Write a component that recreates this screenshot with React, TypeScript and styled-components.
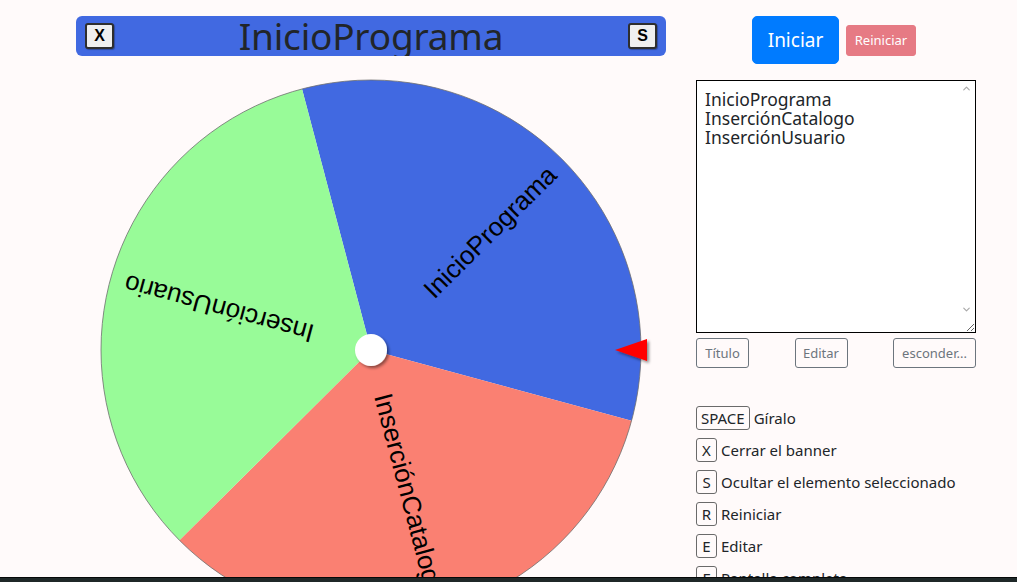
import styled, { createGlobalStyle } from "styled-components";
import { ChevronUp, ChevronDown } from "lucide-react";

const GlobalStyle = createGlobalStyle`
    html, body {
        margin: 0;
        padding: 0;
        overflow: hidden;
        background: #fffafa;
        font-family: "Noto Sans", "Open Sans", sans-serif;
        color: #212529;
    }
`;

const Page = styled.main`
    display: flex;
    flex-direction: row;
    align-items: flex-start;
    gap: 30px;
    padding: 16px 0 0 76px;
`;

const LeftColumn = styled.section`
    width: 590px;
    display: flex;
    flex-direction: column;
`;

const Banner = styled.header`
    height: 40px;
    background: #4169e1;
    border-radius: 6px;
    display: grid;
    grid-template-columns: auto 1fr auto;
    align-items: center;
    padding: 0 9px;
    box-sizing: border-box;
    overflow: hidden;
`;

const BannerTitle = styled.h1`
    margin: 0;
    font-size: 37px;
    font-weight: 400;
    line-height: 40px;
    height: 40px;
    text-align: center;
    color: #212529;
    letter-spacing: -0.2px;
`;

const BannerButton = styled.button`
    width: 29px;
    height: 26px;
    padding: 0;
    background: #efefef;
    border: 2px solid #2e2e2e;
    border-radius: 3px;
    font-family: "Liberation Sans", Arial, sans-serif;
    font-weight: 700;
    font-size: 16px;
    color: #000;
    box-shadow: 1px 1px 1px rgba(0, 0, 0, 0.3);
`;

const WheelArea = styled.div`
    margin-top: 14px;
    height: 560px;
`;

const RightColumn = styled.aside`
    width: 280px;
    display: flex;
    flex-direction: column;
`;

const ButtonRow = styled.div`
    display: flex;
    justify-content: center;
    align-items: center;
    gap: 7px;
    height: 48px;
    padding-right: 4px;
`;

const StartButton = styled.button`
    background: #007bff;
    color: #fff;
    border: 1px solid #007bff;
    border-radius: 5px;
    font-family: inherit;
    font-size: 19px;
    height: 48px;
    width: 87px;
    padding: 0;
`;

const ResetButton = styled.button`
    background: #e67a84;
    color: #fff;
    border: 1px solid #e67a84;
    border-radius: 3px;
    font-family: inherit;
    font-size: 13px;
    height: 31px;
    width: 70px;
    padding: 0;
`;

const EditorWrap = styled.div`
    position: relative;
    margin-top: 16px;
    height: 253px;
`;

const Editor = styled.textarea`
    width: 280px;
    height: 253px;
    box-sizing: border-box;
    border: 1px solid #000;
    background: #fff;
    padding: 9px 8px;
    font-family: inherit;
    font-size: 17.5px;
    line-height: 19px;
    color: #212529;
    outline: none;
    resize: both;
    display: block;
`;

const ScrollArrow = styled.span<{ $bottom?: boolean }>`
    position: absolute;
    right: 4px;
    ${(p) => (p.$bottom ? "bottom: 18px;" : "top: 3px;")}
    color: #a8a8a8;
    display: flex;
`;

const ActionRow = styled.div`
    margin-top: 5px;
    display: flex;
    justify-content: space-between;
`;

const OutlineButton = styled.button<{ $width: number }>`
    width: ${(p) => p.$width}px;
    height: 30px;
    padding: 0;
    background: transparent;
    border: 1px solid #6c757d;
    border-radius: 3px;
    color: #6c757d;
    font-family: inherit;
    font-size: 13px;
`;

const ShortcutList = styled.ul`
    list-style: none;
    margin: 38px 0 0;
    padding: 0;
    display: flex;
    flex-direction: column;
    gap: 8px;
`;

const ShortcutRow = styled.li`
    display: flex;
    align-items: center;
    gap: 4px;
    height: 24px;
    font-size: 15px;
    color: #212529;
`;

const Key = styled.kbd`
    font-family: inherit;
    font-size: 15px;
    height: 24px;
    line-height: 22px;
    box-sizing: border-box;
    padding: 0 4px;
    min-width: 21px;
    text-align: center;
    border: 1px solid #6a6a6a;
    border-radius: 3px;
    color: #212529;
`;

const BottomBar = styled.div`
    position: fixed;
    left: 0;
    right: 0;
    bottom: 0;
    height: 4px;
    background: #1f2828;
    border-top: 1px solid #060909;
`;

const items = [
    { label: "InicioPrograma", color: "#4169e1" },
    { label: "InserciónCatalogo", color: "#fa8072" },
    { label: "InserciónUsuario", color: "#98fb98" },
];

const R = 270;
const START = -104.8;

function polar(deg: number, r: number) {
    const a = (deg * Math.PI) / 180;
    return [Math.cos(a) * r, Math.sin(a) * r];
}

const Wheel: React.FC = () => {
    const step = 360 / items.length;
    return (
        <svg width={590} height={560} viewBox="0 0 590 560">
            <defs>
                <filter id="shadow" x="-50%" y="-50%" width="200%" height="200%">
                    <feDropShadow dx="2" dy="2" stdDeviation="1.5" floodColor="#000" floodOpacity="0.45" />
                </filter>
            </defs>
            <g transform="translate(295,280)">
                {items.map((it, i) => {
                    const a0 = START + i * step;
                    const a1 = a0 + step;
                    const [x0, y0] = polar(a0, R);
                    const [x1, y1] = polar(a1, R);
                    return (
                        <path
                            key={it.label}
                            d={`M0 0 L${x0} ${y0} A${R} ${R} 0 0 1 ${x1} ${y1} Z`}
                            fill={it.color}
                        />
                    );
                })}
                <circle r={R} fill="none" stroke="#6f6f6f" strokeWidth={0.8} />
                {items.map((it, i) => {
                    const mid = START + i * step + step / 2;
                    return (
                        <text
                            key={it.label}
                            transform={`rotate(${mid})`}
                            x={255}
                            y={0}
                            textAnchor="end"
                            dominantBaseline="central"
                            fontFamily="'Liberation Sans', Arial, sans-serif"
                            fontSize={26}
                            fill="#000"
                        >
                            {it.label}
                        </text>
                    );
                })}
                <circle r={16} fill="#fff" filter="url(#shadow)" />
            </g>
            <polygon points="539,280 571,269 571,291" fill="#ff0000" filter="url(#shadow)" />
        </svg>
    );
};

const shortcuts = [
    { key: "SPACE", text: "Gíralo" },
    { key: "X", text: "Cerrar el banner" },
    { key: "S", text: "Ocultar el elemento seleccionado" },
    { key: "R", text: "Reiniciar" },
    { key: "E", text: "Editar" },
    { key: "F", text: "Pantalla completa" },
];

const App: React.FC = () => {
    return (
        <>
            <GlobalStyle />
            <Page>
                <LeftColumn>
                    <Banner>
                        <BannerButton>X</BannerButton>
                        <BannerTitle>InicioPrograma</BannerTitle>
                        <BannerButton>S</BannerButton>
                    </Banner>
                    <WheelArea>
                        <Wheel />
                    </WheelArea>
                </LeftColumn>
                <RightColumn>
                    <ButtonRow>
                        <StartButton>Iniciar</StartButton>
                        <ResetButton>Reiniciar</ResetButton>
                    </ButtonRow>
                    <EditorWrap>
                        <Editor
                            spellCheck={false}
                            defaultValue={"InicioPrograma\nInserciónCatalogo\nInserciónUsuario"}
                        />
                        <ScrollArrow>
                            <ChevronUp size={11} strokeWidth={2.5} />
                        </ScrollArrow>
                        <ScrollArrow $bottom>
                            <ChevronDown size={11} strokeWidth={2.5} />
                        </ScrollArrow>
                    </EditorWrap>
                    <ActionRow>
                        <OutlineButton $width={53}>Título</OutlineButton>
                        <OutlineButton $width={53}>Editar</OutlineButton>
                        <OutlineButton $width={83}>esconder...</OutlineButton>
                    </ActionRow>
                    <ShortcutList>
                        {shortcuts.map((s) => (
                            <ShortcutRow key={s.key}>
                                <Key>{s.key}</Key>
                                <span>{s.text}</span>
                            </ShortcutRow>
                        ))}
                    </ShortcutList>
                </RightColumn>
            </Page>
            <BottomBar />
        </>
    );
};

export default App;
